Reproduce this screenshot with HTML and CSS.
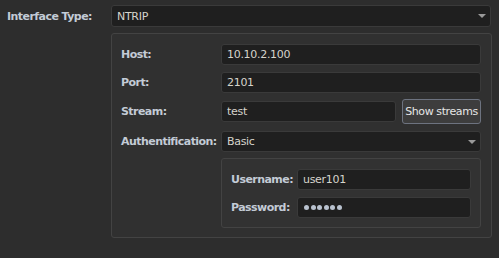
FILE: index.html
```html
<!DOCTYPE html>
<html>
<head>
<meta charset="utf-8">
<link rel="stylesheet" href="styles.css">
</head>
<body>
<div class="page">
  <div class="row top">
    <div class="label main">Interface Type:</div>
    <div class="combo wide"><span class="val">NTRIP</span><span class="arrow"></span></div>
  </div>
  <div class="group">
    <div class="row r1">
      <div class="label sub">Host:</div>
      <div class="field grow"><span class="val">10.10.2.100</span></div>
    </div>
    <div class="row r2">
      <div class="label sub">Port:</div>
      <div class="field grow"><span class="val">2101</span></div>
    </div>
    <div class="row r3">
      <div class="label sub">Stream:</div>
      <div class="field grow"><span class="val">test</span></div>
      <div class="btn">Show streams</div>
    </div>
    <div class="row r4">
      <div class="label sub">Authentification:</div>
      <div class="combo grow"><span class="val">Basic</span><span class="arrow"></span></div>
    </div>
    <div class="inner">
      <div class="row ir1">
        <div class="label inl">Username:</div>
        <div class="field grow"><span class="val">user101</span></div>
      </div>
      <div class="row ir2">
        <div class="label inl">Password:</div>
        <div class="field grow"><span class="dots"><i></i><i></i><i></i><i></i><i></i><i></i></span></div>
      </div>
    </div>
  </div>
</div>
</body>
</html>
```
FILE: styles.css
```css
html, body {
  margin: 0;
  padding: 0;
  background: #2d2d2d;
}
body {
  font-family: "DejaVu Sans", Verdana, sans-serif;
  font-size: 11px;
  color: #d4d4d4;
  width: 499px;
  height: 258px;
  overflow: hidden;
}
.page {
  padding: 5px 7px 0 7px;
}
.row {
  display: flex;
  align-items: center;
}
.label {
  font-weight: bold;
  color: #c3cbd6;
  font-size: 11px;
  letter-spacing: -0.55px;
  white-space: nowrap;
  flex-shrink: 0;
}
.label.main { width: 104px; }
.label.sub { width: 100px; }
.label.inl { width: 66px; }
.combo, .field {
  box-sizing: border-box;
  height: 21px;
  background: #1f1f1f;
  border: 1px solid #3a3a3a;
  border-radius: 3px;
  display: flex;
  align-items: center;
  position: relative;
  min-width: 0;
}
.combo.wide { width: 380px; height: 22px; }
.grow { flex: 1; }
.val {
  padding-left: 5px;
  color: #d6d4cc;
  font-size: 11px;
  letter-spacing: -0.3px;
}
.arrow {
  position: absolute;
  right: 4px;
  top: 8px;
  width: 0;
  height: 0;
  border-left: 4px solid transparent;
  border-right: 4px solid transparent;
  border-top: 4px solid #9a9a9a;
}
.group {
  box-sizing: border-box;
  margin: 6px 0 0 104px;
  width: 381px;
  height: 205px;
  border: 1px solid #434343;
  border-radius: 3px;
  background: #303030;
  padding: 10px 10px 0 9px;
}
.group > .row { height: 20px; margin-bottom: 8px; }
.group > .row.r3 { height: 25px; margin-top: -1px; margin-bottom: 7px; }
.r3 .field { margin-right: 6px; }
.btn {
  box-sizing: border-box;
  width: 79px;
  flex-shrink: 0;
  height: 25px;
  border: 1px solid #6d7380;
  border-radius: 3px;
  background: #3d3d3d;
  color: #e6e6e6;
  font-size: 11px;
  letter-spacing: -0.4px;
  white-space: nowrap;
  display: flex;
  align-items: center;
  justify-content: center;
}
.inner {
  box-sizing: border-box;
  margin-left: 100px;
  width: 260px;
  height: 70px;
  margin-top: -1px;
  border: 1px solid #434343;
  border-radius: 3px;
  background: #323232;
  padding: 10px 9px 0 9px;
}
.inner .row { height: 20px; margin-bottom: 8px; }
.dots {
  display: flex;
  gap: 1.5px;
  padding-left: 6px;
}
.dots i {
  display: block;
  width: 5px;
  height: 5px;
  border-radius: 50%;
  background: #b9c2cf;
}
```
